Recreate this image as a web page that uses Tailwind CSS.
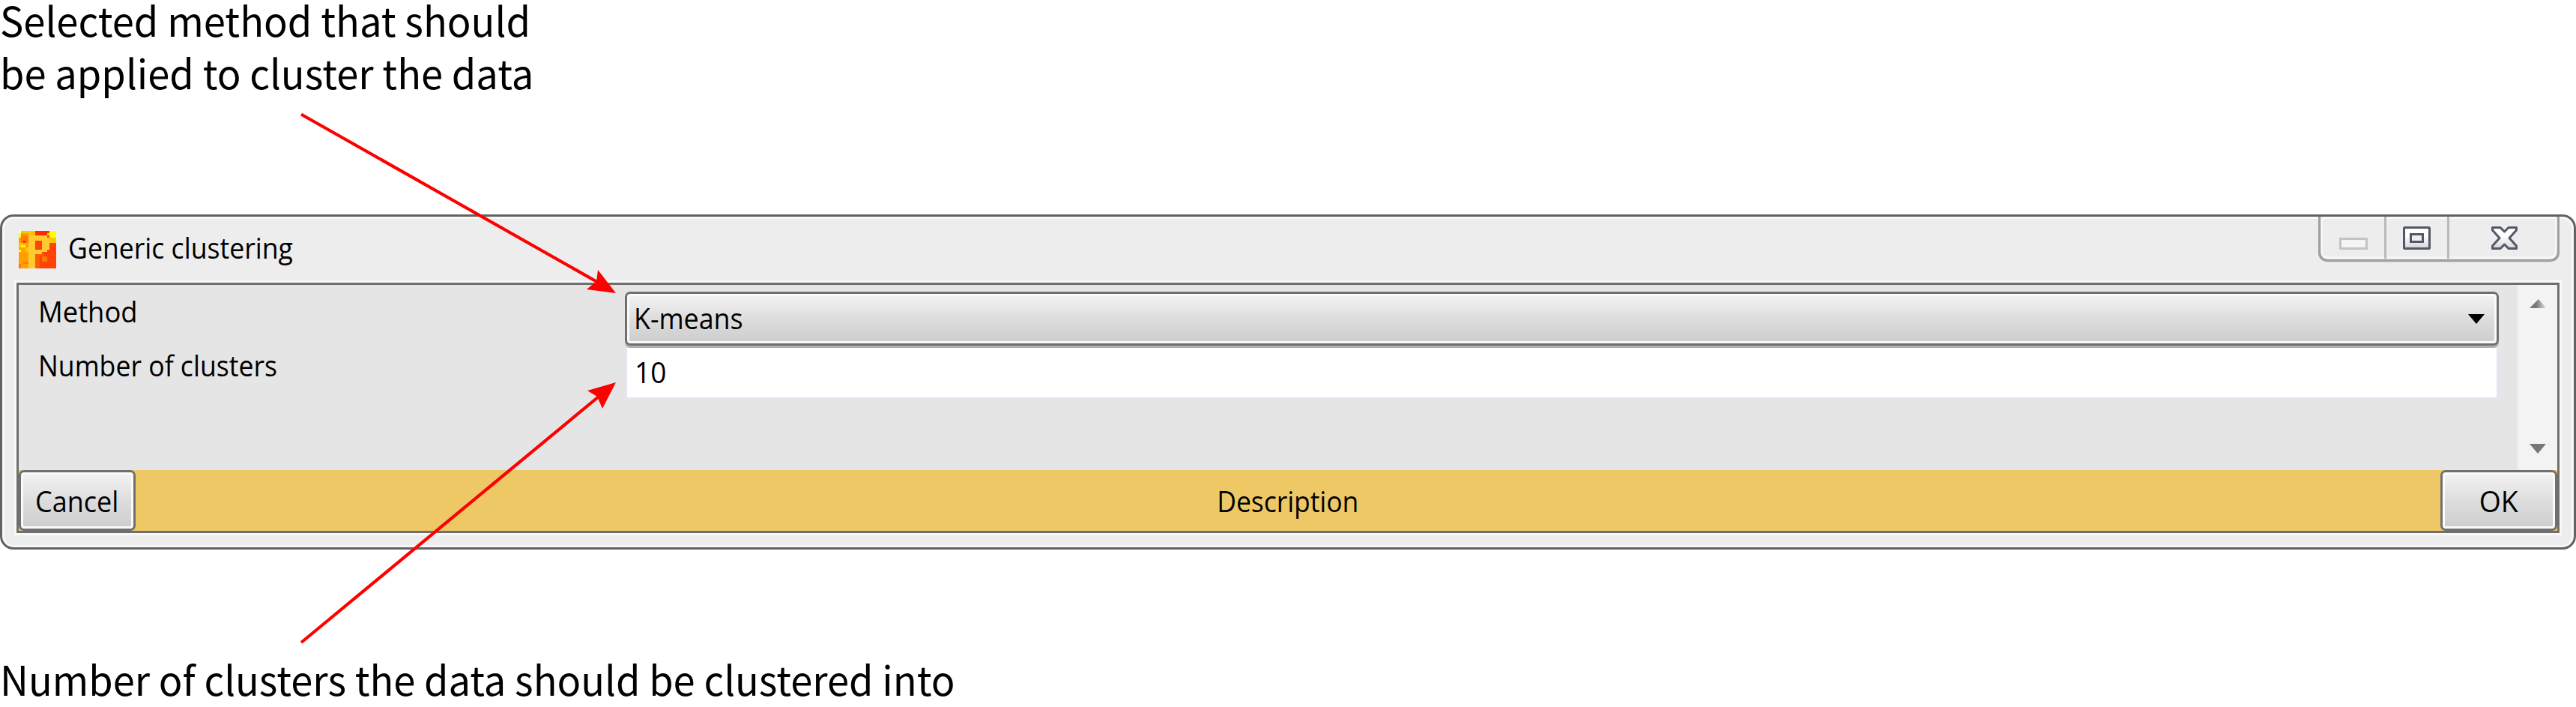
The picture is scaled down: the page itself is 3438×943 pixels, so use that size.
<!DOCTYPE html>
<html lang="en">
<head>
<meta charset="utf-8">
<title>Generic clustering</title>
<script src="https://cdn.jsdelivr.net/npm/@tailwindcss/browser@4"></script>
</head>
<body class="bg-white">
<main class="relative flex h-[943px] w-[3438px] flex-col overflow-hidden bg-white font-['Open_Sans','Noto_Sans',sans-serif] text-[38.5px] text-black">
  <header class="h-[286px] font-['Noto_Sans_CJK_SC',sans-serif] text-[54px] leading-[70px] whitespace-nowrap">
    <p class="-mt-[9px]"><span class="inline-block origin-left scale-x-[.973]">Selected method that should</span></p>
    <p><span class="inline-block origin-left scale-x-[.972]">be applied to cluster the data</span></p>
  </header>

  <section class="flex h-[447px] flex-col rounded-[18px] border-[3px] border-[#626262] bg-[#ededed] shadow-[inset_0_0_0_3px_#f8f8f8]">
    <div class="flex h-[88px] justify-between pr-[19px]">
      <div class="flex h-[88px] items-start pt-[19px] pl-[22px]">
        <svg class="size-[50px]" viewBox="0 0 16 16" shape-rendering="crispEdges">
          <rect width="16" height="16" fill="#ff4208"/>
          <path fill="#ffa000" d="M0 0h7v16H0z"/>
          <path fill="#ff7a00" d="M1 2h3v3H1zM0 14h1v2H0zM2 13h2v1H2zM10 11h2v2h-2z"/>
          <path fill="#ff5c00" d="M7 10h2v6H7zM9 10h2v1H9z"/>
          <path fill="#ff2a00" d="M2 4h1v1H2zM7 0h5v2H7z"/>
          <path fill="#ffc400" d="M1 0h3v1H1zM4 0h3v2H4zM0 5h3v2H0zM3 7h1v2H3zM12 1h1v1h-1zM13 3h3v2h-3z"/>
          <path fill="#ffff00" d="M0 1h1v2H0zM1 6h2v1H1zM0 8h1v1H0zM13 0h3v3h-3z"/>
          <path fill="#ffffc0" d="M0 0h1v1H0z"/>
          <path fill="#ffcb30" d="M4 2h8v1h1v5h-1v1h-2v1H7v6H4zM7 4v4h3V4z" fill-rule="evenodd"/>
        </svg>
        <span class="ml-[16px] inline-block origin-left scale-x-[.925] leading-[44px] whitespace-nowrap">Generic clustering</span>
      </div>
      <svg class="h-[64px] w-[322px]" viewBox="0 0 322 64">
        <defs><linearGradient id="g" x2="0" y2="1"><stop offset=".4" stop-color="#fff"/><stop offset="1" stop-color="#d4d4d4"/></linearGradient></defs>
        <path d="M4.500 0V47Q4.500 55 13 55H309Q317.500 55 317.500 47V0" fill="none" stroke="#f8f8f8" stroke-width="3"/>
        <path d="M1.500 -3V46Q1.500 58.500 14 58.500H308Q320.500 58.500 320.500 46V-3" fill="none" stroke="#a0a0a0" stroke-width="3.500"/>
        <path d="M89.500 0V56M173.500 0V56" stroke="#bababa" stroke-width="3"/>
        <rect x="29.500" y="29.500" width="35" height="13" fill="#f4f4f4" stroke="#c3c3c3" stroke-width="3"/>
        <rect x="114.500" y="14.500" width="34" height="28" rx="1" fill="url(#g)" stroke="#525769" stroke-width="3"/>
        <rect x="123.500" y="23.500" width="16" height="10" fill="#eee" stroke="#525769" stroke-width="3"/>
        <path d="M232.500 14.500H243L248.500 20L254 14.500H264.500V18L255 28.500L264.500 39V42.500H254L248.500 37L243 42.500H232.500V39L242 28.500L232.500 18Z" fill="url(#g)" stroke="#525769" stroke-width="3" stroke-linejoin="round"/>
      </svg>
    </div>

    <div class="mx-[19px] flex h-[334px] flex-col border-[3px] border-[#6f6f6f] shadow-[0_0_0_3px_#f8f8f8]">
      <div class="flex h-[247px] bg-[#e5e5e5]">
        <div class="w-[809px] pl-[26px] leading-[70px] whitespace-nowrap">
          <p class="h-[72px]"><span class="inline-block origin-left scale-x-[.945]">Method</span></p>
          <p class="h-[72px]"><span class="inline-block origin-left scale-x-[.925]">Number of clusters</span></p>
        </div>
        <div class="w-[2501px] pt-[9px]">
          <div class="flex h-[72px] items-center justify-between rounded-[7px] border-[3px] border-[#6f6f6f] bg-linear-to-b from-[#f4f4f4] from-0% via-[#dddddd] via-50% to-[#cdcdcd] pr-[16px] pl-[9px] shadow-[inset_0_0_0_3px_#fafafa,0_3px_0_#b0b0b3]">
            <span class="inline-block origin-left scale-x-[.93]">K-means</span>
            <svg class="h-[13px] w-[22px]" viewBox="0 0 22 13"><path d="M0 0H22L11 13Z"/></svg>
          </div>
          <div class="mt-[3px] flex h-[69px] items-center border-x-[3px] border-b-[3px] border-[#e2e6ee] bg-white pl-[10px]"><span class="inline-block origin-left scale-x-[.96]">10</span></div>
        </div>
        <div class="ml-[25px] flex w-[53px] flex-col items-center justify-between bg-[#f3f3f3] pt-[19px] pb-[22px]">
          <svg class="h-[12px] w-[22px]" viewBox="0 0 22 12"><defs><linearGradient id="u"><stop offset=".4" stop-color="#777"/><stop offset="1" stop-color="#ddd"/></linearGradient></defs><path d="M0 12L12 0L22 12Z" fill="url(#u)"/></svg>
          <svg class="h-[13px] w-[22px]" viewBox="0 0 22 13"><path d="M0 0H22L11 13Z" fill="#777"/></svg>
        </div>
      </div>
      <div class="flex h-[81px] items-stretch justify-between bg-[#edc865]">
        <button class="flex w-[156px] items-center rounded-[7px] border-[3px] border-[#707070] bg-linear-to-b from-[#f4f4f4] from-0% via-[#dddddd] via-50% to-[#cdcdcd] pt-[2px] pl-[19px] shadow-[inset_0_0_0_3px_#fafafa]"><span class="inline-block origin-left scale-x-[.935]">Cancel</span></button>
        <span class="inline-block scale-x-[.92] leading-[83px]">Description</span>
        <button class="flex w-[156px] items-center justify-center rounded-[7px] border-[3px] border-[#707070] bg-linear-to-b from-[#f4f4f4] from-0% via-[#dddddd] via-50% to-[#cdcdcd] pt-[2px] shadow-[inset_0_0_0_3px_#fafafa]"><span class="inline-block scale-x-[.97]">OK</span></button>
      </div>
    </div>
  </section>

  <footer class="pt-[137px] font-['Noto_Sans_CJK_SC',sans-serif] text-[54px] leading-[70px] whitespace-nowrap"><span class="inline-block origin-left scale-x-[.971]">Number of clusters the data should be clustered into</span></footer>

  <svg class="pointer-events-none absolute inset-0 h-[943px] w-[3438px]" viewBox="0 0 3438 943" fill="#f00" stroke="#f00">
    <path d="M402 152.500L796 375.500M402 857L799 529" fill="none" stroke-width="4.200"/>
    <path stroke="none" d="M822 391L798 360L796 375L783 386ZM822 510L784 521L797 529L804 545Z"/>
  </svg>
</main>
</body>
</html>
